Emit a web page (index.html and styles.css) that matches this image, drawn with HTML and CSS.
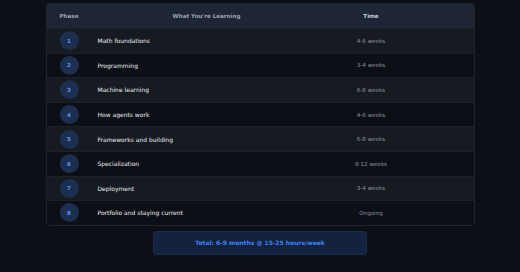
FILE: index.html
```html
<!DOCTYPE html>
<html lang="en">
<head>
<meta charset="UTF-8">
<meta name="viewport" content="width=device-width, initial-scale=1.0">
<title>Learning Roadmap</title>
<link rel="stylesheet" href="styles.css">
</head>
<body>

<div class="page">
    <table class="roadmap">
        <thead>
            <tr>
                <th class="col-phase">Phase</th>
                <th class="col-topic">What You're Learning</th>
                <th class="col-time">Time</th>
            </tr>
        </thead>
        <tbody>
            <tr>
                <td class="col-phase"><span class="badge">1</span></td>
                <td class="col-topic">Math foundations</td>
                <td class="col-time">4-6 weeks</td>
            </tr>
            <tr>
                <td class="col-phase"><span class="badge">2</span></td>
                <td class="col-topic">Programming</td>
                <td class="col-time">3-4 weeks</td>
            </tr>
            <tr>
                <td class="col-phase"><span class="badge">3</span></td>
                <td class="col-topic">Machine learning</td>
                <td class="col-time">6-8 weeks</td>
            </tr>
            <tr>
                <td class="col-phase"><span class="badge">4</span></td>
                <td class="col-topic">How agents work</td>
                <td class="col-time">4-6 weeks</td>
            </tr>
            <tr>
                <td class="col-phase"><span class="badge">5</span></td>
                <td class="col-topic">Frameworks and building</td>
                <td class="col-time">6-8 weeks</td>
            </tr>
            <tr>
                <td class="col-phase"><span class="badge">6</span></td>
                <td class="col-topic">Specialization</td>
                <td class="col-time">8-12 weeks</td>
            </tr>
            <tr>
                <td class="col-phase"><span class="badge">7</span></td>
                <td class="col-topic">Deployment</td>
                <td class="col-time">3-4 weeks</td>
            </tr>
            <tr>
                <td class="col-phase"><span class="badge">8</span></td>
                <td class="col-topic">Portfolio and staying current</td>
                <td class="col-time">Ongoing</td>
            </tr>
        </tbody>
    </table>

    <div class="total">Total: 6-9 months @ 15-25 hours/week</div>
</div>

</body>
</html>
```

FILE: styles.css
```css
body {
    margin: 0;
    background-color: #0c0f16;
    font-family: 'DejaVu Sans', sans-serif;
    color: #e6e8eb;
}

.page {
    display: flex;
    flex-direction: column;
    align-items: center;
    padding-top: 3px;
}

.roadmap {
    width: 429px;
    border-collapse: separate;
    border-spacing: 0;
    border: 1px solid #1f242d;
    border-radius: 4px;
    overflow: hidden;
    table-layout: fixed;
}

.roadmap th {
    height: 24px;
    padding: 0;
    background-color: #1e2636;
    color: #9aa3b0;
    font-size: 5.6px;
    font-weight: bold;
    text-align: center;
}

.roadmap td {
    height: 23.6px;
    padding: 0;
    font-size: 6px;
    border-top: 1px solid #1c2129;
}

.roadmap tbody tr:nth-child(odd) td {
    background-color: #161a21;
}

.roadmap tbody tr:nth-child(even) td {
    background-color: #0c0f15;
}

.roadmap .col-phase {
    width: 25px;
    padding-left: 13px;
    text-align: left;
}

.roadmap .col-topic {
    width: 231px;
    padding-left: 13px;
    color: #eceef1;
}

.roadmap th.col-topic {
    width: 244px;
    padding-left: 0;
    color: #9aa3b0;
}

.roadmap .col-time {
    text-align: center;
    padding-right: 60px;
    color: #8d939b;
    font-size: 5.6px;
}

.roadmap th.col-time {
    color: #c9ced6;
}

.badge {
    display: flex;
    align-items: center;
    justify-content: center;
    width: 19px;
    height: 19px;
    border-radius: 50%;
    background-color: #1d2f4f;
    color: #5294ff;
    font-size: 5.6px;
    font-weight: bold;
}

.total {
    margin-top: 5px;
    width: 212px;
    height: 22px;
    display: flex;
    align-items: center;
    justify-content: center;
    background-color: #13223d;
    border: 1px solid #1a2d4d;
    border-radius: 4px;
    color: #3b82f6;
    font-size: 6px;
    font-weight: bold;
}
```
